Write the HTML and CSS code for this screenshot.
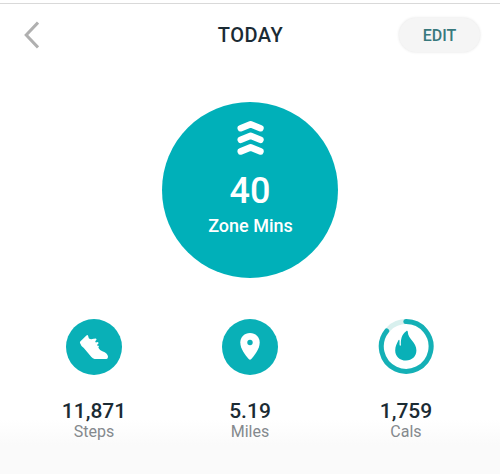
FILE: index.html
```html
<!DOCTYPE html>
<html lang="en">

<head>
  <meta charset="UTF-8" />
  <meta name="viewport" content="width=device-width, initial-scale=1.0" />
  <title>Today</title>
  <link rel="stylesheet" href="styles.css">
</head>

<body>
  <header class="topbar">
    <button class="back" aria-label="Back">
      <svg width="16" height="28" viewBox="0 0 16 28">
        <path d="M15 1.5L3.2 14L15 26.5" />
      </svg>
    </button>
    <h1>TODAY</h1>
    <button class="edit">EDIT</button>
  </header>

  <main>
    <div class="zone">
      <svg class="chevrons" width="28" height="36" viewBox="0 0 28 36">
        <path d="M4.8 8.2L14.6 4.2L24.4 8.2M4.8 19.8L14.6 15.8L24.4 19.8M4.8 31.4L14.6 27.4L24.4 31.4" />
      </svg>
      <div class="zone-value">40</div>
      <div class="zone-label">Zone Mins</div>
    </div>

    <div class="stats">
      <div class="stat">
        <svg width="56" height="56" viewBox="0 0 56 56">
          <circle class="disc" cx="28" cy="28" r="28" />
          <path class="glyph" d="M14 24Q13.6 23 14.5 22.2L20.4 16.5Q21.6 15.5 22.1 16.8L22.8 19.3Q24.6 20.9 27.5 19.8L30 19.4L30.6 20.8L29.2 22.2L29.8 23.4L32 22.9L32.6 24.2L31.2 25.7L31.6 27L33 26.8L32.4 28.8Q33.5 31.2 36.4 32.2Q41.6 33.8 42 37.6Q42.1 39.8 40.5 39.9L28.6 39.9Q26.8 39.8 25.4 38L17.8 29.1Q14.8 26.8 14 24Z" />
        </svg>
        <div class="value">11,871</div>
        <div class="label">Steps</div>
      </div>

      <div class="stat">
        <svg width="56" height="56" viewBox="0 0 56 56">
          <circle class="disc" cx="28" cy="28" r="28" />
          <path class="glyph" d="M28 14C22.5 14 18.3 18.1 18.3 23.5C18.3 29.8 23.4 36.2 26.7 40.1Q28 41.6 29.3 40.1C32.6 36.2 37.7 29.8 37.7 23.5C37.7 18.1 33.5 14 28 14Z" />
          <circle class="disc" cx="28" cy="23.5" r="2.7" />
        </svg>
        <div class="value">5.19</div>
        <div class="label">Miles</div>
      </div>

      <div class="stat">
        <svg width="56" height="56" viewBox="0 0 56 56">
          <circle class="track" cx="28.2" cy="27.5" r="24.9" />
          <path class="progress" d="M27.8 2.6A24.9 24.9 0 1 1 8.7 12" />
          <path class="flame" d="M28.2 12.2C29.1 11.5 29.8 11.9 29.8 13C30 20 38.4 23.4 38.4 31.2C38.4 37.2 34 41.5 28 41.5C21.8 41.5 17.2 37.3 17.2 31.4C17.2 27.4 18.9 24.5 20.3 21.5C20.7 20.6 21.5 20.7 21.5 21.6L21.6 25.8C21.7 27.1 23 27 22.9 25.7C22.6 20.8 23.6 15.3 28.2 12.2Z" />
        </svg>
        <div class="value">1,759</div>
        <div class="label">Cals</div>
      </div>
    </div>
  </main>
</body>

</html>
```

FILE: styles.css
```css
* {
  box-sizing: border-box;
}

body {
  margin: 0;
  height: 474px;
  padding-top: 3px;
  overflow: hidden;
  font-family: Roboto, "Liberation Sans", sans-serif;
  color: #1b2b34;
  background: linear-gradient(#fff 420px, #fafafa 445px);
}

.topbar {
  display: grid;
  grid-template-columns: 1fr auto 1fr;
  align-items: center;
  height: 63px;
  padding: 0 20px 0 23px;
  border-top: 1px solid #d9d9d9;
}

button {
  border: none;
  background: none;
  padding: 0;
  font-family: inherit;
}

.back {
  justify-self: start;
  height: 28px;
}

.back svg {
  display: block;
  fill: none;
  stroke: #b0b0b0;
  stroke-width: 3;
}

h1 {
  margin: 0 2px 0 0;
  font-size: 20px;
  font-weight: 500;
  letter-spacing: 0.5px;
}

.edit {
  justify-self: end;
  width: 81px;
  height: 34px;
  border-radius: 17px;
  background: #f5f5f5;
  box-shadow: 0 0 3px rgba(0, 0, 0, 0.12);
  color: #38797d;
  font-size: 16px;
  font-weight: 500;
}

.zone {
  display: flex;
  flex-direction: column;
  align-items: center;
  width: 176px;
  height: 176px;
  margin: 36px auto 0;
  padding-top: 18px;
  border-radius: 50%;
  background: #00b0b9;
  color: #fff;
}

.chevrons {
  fill: none;
  stroke: #fff;
  stroke-width: 6.6;
  stroke-linecap: round;
  stroke-linejoin: round;
}

.zone-value {
  margin-top: 14px;
  font-size: 36px;
  font-weight: 500;
  line-height: 42px;
}

.zone-label {
  margin: 3px 0 0 1px;
  font-size: 18px;
  font-weight: 500;
  line-height: 22px;
}

.stats {
  display: grid;
  grid-template-columns: repeat(3, 156px);
  justify-content: center;
  margin-top: 41px;
}

.stat {
  display: flex;
  flex-direction: column;
  align-items: center;
}

.disc,
.flame {
  fill: #09b0b7;
}

.glyph {
  fill: #fff;
}

.track,
.progress {
  fill: none;
  stroke: #d8f0ee;
  stroke-width: 5;
}

.progress {
  stroke: #14b0b6;
  stroke-linecap: round;
}

.value {
  margin-top: 24px;
  font-size: 21px;
  font-weight: 500;
  line-height: 24px;
}

.label {
  font-size: 16px;
  line-height: 18px;
  color: #84898d;
}
```
